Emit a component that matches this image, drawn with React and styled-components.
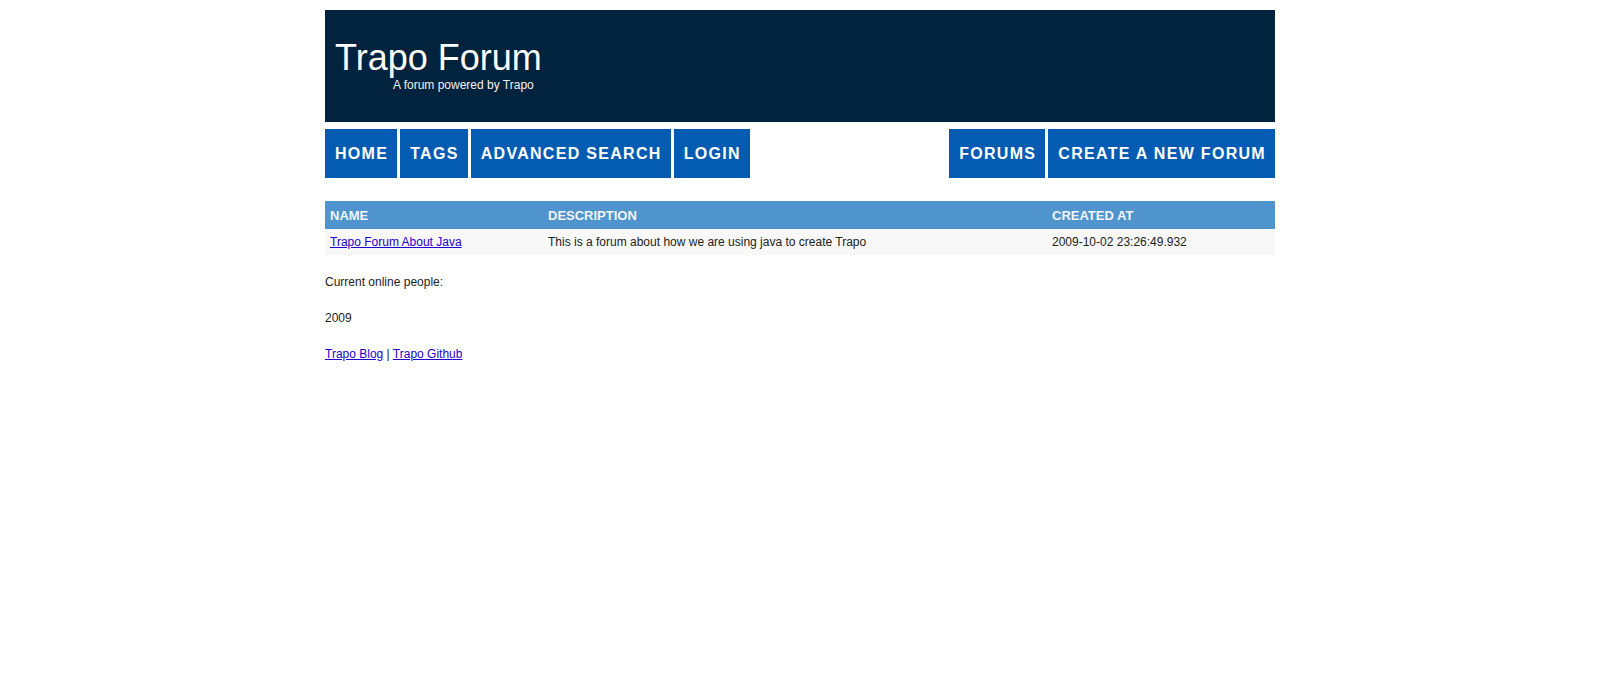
import React from "react";
import styled, { createGlobalStyle } from "styled-components";

const Global = createGlobalStyle`
  html, body { margin: 0; padding: 0; background: #ffffff; }
  body {
    font-family: "Liberation Sans", Arial, sans-serif;
    font-size: 12px;
    color: #222222;
  }
  a { color: #2200cc; text-decoration: underline; }
`;

const Page = styled.div`
  width: 950px;
  margin: 10px auto 0;
`;

const Header = styled.header`
  height: 112px;
  box-sizing: border-box;
  background: #02233d;
  padding: 30px 10px 0;
  color: #ffffff;
`;

const Title = styled.h1`
  margin: 0;
  font-size: 36px;
  font-weight: normal;
  line-height: 36px;
`;

const Subtitle = styled.div`
  margin: 2px 0 0 58px;
  font-size: 12px;
  line-height: 14px;
  color: #f2f2f2;
`;

const Nav = styled.nav`
  margin-top: 7px;
  display: flex;
  justify-content: space-between;
`;

const NavGroup = styled.div`
  display: flex;
  gap: 3px;
`;

const NavButton = styled.a`
  display: flex;
  align-items: center;
  height: 49px;
  padding: 0 9px 0 10px;
  background: #035cb2;
  color: #ffffff;
  font-size: 16px;
  font-weight: bold;
  letter-spacing: 1.3px;
  text-transform: uppercase;
  text-decoration: none;
  white-space: nowrap;
`;

const Table = styled.table`
  margin-top: 23px;
  width: 100%;
  border-collapse: collapse;
  table-layout: fixed;
`;

const Th = styled.th`
  box-sizing: border-box;
  width: ${(p) => p.$w}px;
  height: 28px;
  padding: 0 5px;
  background: #5094ce;
  color: #f0f4f8;
  font-size: 13px;
  font-weight: bold;
  text-align: left;
  text-transform: uppercase;
`;

const Td = styled.td`
  height: 26px;
  padding: 0 5px;
  background: #f8f8f8;
  font-size: 12px;
  color: #222222;
`;

const Para = styled.p`
  margin: 18px 0;
  line-height: 18px;
`;

export default function App() {
  return (
    <>
      <Global />
      <Page>
        <Header>
          <Title>Trapo Forum</Title>
          <Subtitle>A forum powered by Trapo</Subtitle>
        </Header>
        <Nav>
          <NavGroup>
            <NavButton href="#">Home</NavButton>
            <NavButton href="#">Tags</NavButton>
            <NavButton href="#">Advanced Search</NavButton>
            <NavButton href="#">Login</NavButton>
          </NavGroup>
          <NavGroup>
            <NavButton href="#">Forums</NavButton>
            <NavButton href="#">Create a new forum</NavButton>
          </NavGroup>
        </Nav>
        <Table>
          <thead>
            <tr>
              <Th $w={218}>Name</Th>
              <Th $w={504}>Description</Th>
              <Th $w={228}>Created at</Th>
            </tr>
          </thead>
          <tbody>
            <tr>
              <Td><a href="#">Trapo Forum About Java</a></Td>
              <Td>This is a forum about how we are using java to create Trapo</Td>
              <Td>2009-10-02 23:26:49.932</Td>
            </tr>
          </tbody>
        </Table>
        <Para>Current online people:</Para>
        <Para>2009</Para>
        <Para>
          <a href="#">Trapo Blog</a> | <a href="#">Trapo Github</a>
        </Para>
      </Page>
    </>
  );
}
